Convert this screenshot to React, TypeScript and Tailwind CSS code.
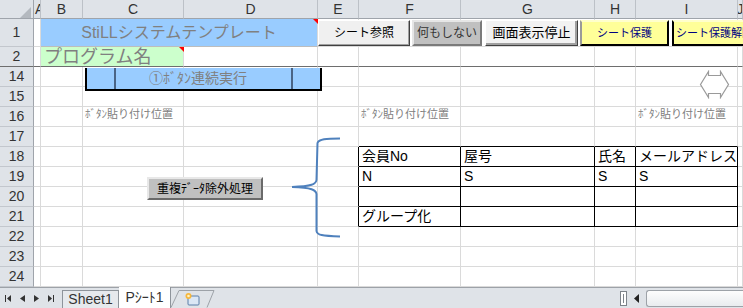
import React from 'react';

const COLS = ['A', 'B', 'C', 'D', 'E', 'F', 'G', 'H', 'I', 'J'];
const ROWS = ['1', '2', '14', '15', '16', '17', '18', '19', '20', '21', '22', '23', '24'];
const TABLE_COLS = ['F', 'G', 'H', 'I'];
const TABLE_ROWS = ['18', '19', '20', '21'];

// table + note text, keyed by cell address
const CELL_TEXT: Record<string, string> = {
  F18: '会員No',
  G18: '屋号',
  H18: '氏名',
  I18: 'メールアドレス',
  F19: 'N',
  G19: 'S',
  H19: 'S',
  I19: 'S',
  F21: 'グループ化',
};

const NOTE_CELLS = ['C16', 'F16', 'I16'];

function Sheet() {
  const cells: React.ReactNode[] = [];

  cells.push(
    <div key="corner" className="relative border-r border-b border-r-[#9fa4ab] border-b-[#9fa4ab] bg-[#dfe3e8]">
      <svg className="absolute left-[20px] top-[7px]" width="11" height="11" viewBox="0 0 11 11">
        <polygon points="11,0 11,11 0,11" fill="#b4b9bf" />
      </svg>
    </div>
  );
  COLS.forEach((c) =>
    cells.push(
      <div
        key={'h' + c}
        className={`flex items-center overflow-hidden whitespace-nowrap border-r border-b border-r-[#bcc1c7] border-b-[#9fa4ab] bg-[#dfe3e8] text-[14px] text-[#333] ${c === 'A' ? 'justify-start pl-[1px]' : 'justify-center'}`}
      >
        {c}
      </div>
    )
  );

  ROWS.forEach((r) => {
    const frozen = r === '2';
    cells.push(
      <div
        key={'r' + r}
        className={`flex items-center justify-center border-r border-b border-r-[#9fa4ab] bg-[#dfe3e8] text-[14px] text-[#333] ${frozen ? 'border-b-[#6e6e6e]' : 'border-b-[#c3c7cd]'}`}
      >
        {r}
      </div>
    );

    COLS.forEach((c) => {
      if (r === '1' && (c === 'C' || c === 'D')) return;
      if (r === '2' && c === 'C') return;
      const addr = c + r;

      if (r === '1' && c === 'B') {
        cells.push(
          <div
            key={addr}
            className="col-span-3 flex items-center justify-center border-r border-b border-r-[#dadada] border-b-[#bdbdbd] bg-[#99ccff] text-[16px] text-[#808080]"
          >
            StiLLシステムテンプレート
          </div>
        );
        return;
      }
      if (r === '2' && c === 'B') {
        cells.push(
          <div
            key={addr}
            className="col-span-2 flex items-center whitespace-nowrap border-r border-b border-r-[#dadada] border-b-[#6e6e6e] bg-[#ccffcc] pl-[3px] text-[18px] leading-none text-[#808080]"
          >
            プログラム名
          </div>
        );
        return;
      }

      const inTable = TABLE_ROWS.includes(r);
      const rightBlack = inTable && (c === 'E' || TABLE_COLS.includes(c));
      const bottomBlack = (r === '17' || inTable) && TABLE_COLS.includes(c);
      const note = NOTE_CELLS.includes(addr);

      cells.push(
        <div
          key={addr}
          className={`flex whitespace-nowrap border-r border-b ${rightBlack ? 'border-r-black' : 'border-r-[#dadada]'} ${frozen ? 'border-b-[#6e6e6e]' : bottomBlack ? 'border-b-black' : 'border-b-[#dadada]'} ${note ? 'items-start pl-[2px] pt-[2px] text-[11px] leading-none text-[#808080]' : 'items-center pl-[3px] text-[14px] text-black'}`}
        >
          {note ? 'ﾎﾞﾀﾝ貼り付け位置' : CELL_TEXT[addr]}
        </div>
      );
    });
  });

  return (
    <div className="grid grid-cols-[34px_7px_42px_101px_134px_41px_102px_134px_41px_102px_1fr] grid-rows-[19px_28px_20px_repeat(11,20px)]">
      {cells}
    </div>
  );
}

function Overlays() {
  return (
    <>
      {/* comment markers */}
      <svg className="absolute left-[313px] top-[19px]" width="5" height="5" viewBox="0 0 5 5">
        <polygon points="0,0 5,0 5,5" fill="#ff0000" />
      </svg>
      <svg className="absolute left-[179px] top-[47px]" width="5" height="5" viewBox="0 0 5 5">
        <polygon points="0,0 5,0 5,5" fill="#ff0000" />
      </svg>

      {/* macro buttons on row 1 */}
      <div className="absolute left-[318px] top-[20px] flex h-[26px] w-[92px] items-center justify-center border border-t-white border-l-white border-r-[#404040] border-b-[#404040] bg-[#f0f0f0] text-[12px] text-black shadow-[inset_-1px_-1px_0_#a0a0a0]">
        シート参照
      </div>
      <div className="absolute left-[412px] top-[20px] flex h-[26px] w-[70px] items-center justify-center border-2 border-t-[#e6e6e6] border-l-[#e6e6e6] border-r-[#7a7a7a] border-b-[#7a7a7a] bg-[#c0c0c0] text-[12px] text-[#333]">
        何もしない
      </div>
      <div className="absolute left-[485px] top-[20px] flex h-[26px] w-[93px] items-center justify-center border border-t-white border-l-white border-r-[#404040] border-b-[#404040] bg-[#f2f2f2] text-[13px] text-black shadow-[inset_-2px_-2px_0_#a0a0a0]">
        画面表示停止
      </div>
      <div className="absolute left-[580px] top-[20px] flex h-[26px] w-[89px] items-center justify-center border-2 border-t-[#ffffcc] border-l-[#9a9a9a] border-r-black border-b-black bg-[#ffff99] text-[11px] text-[#000080]">
        シート保護
      </div>
      <div className="absolute left-[672px] top-[20px] flex h-[26px] w-[80px] items-center justify-start overflow-hidden whitespace-nowrap border-2 border-t-[#ffffcc] border-l-black border-r-black border-b-black bg-[#ffff99] pl-[2px] text-[11px] text-[#000080]">
        シート保護解除
      </div>

      {/* blue run-all bar on row 14 */}
      <div className="absolute left-[85px] top-[68px] flex h-[23px] w-[237px] border-2 border-t-0 border-black bg-[#99ccff]">
        <div className="w-[29px] shrink-0 border-r-2 border-[#4a6485]" />
        <div className="flex min-w-0 flex-1 items-center justify-start whitespace-nowrap border-r-2 border-[#4a6485] pl-[33px] text-[14px] text-[#808080]">
          ①ﾎﾞﾀﾝ連続実行
        </div>
        <div className="w-[27px] shrink-0" />
      </div>

      {/* left-right arrow shape */}
      <svg className="absolute left-[699px] top-[70px]" width="31" height="29" viewBox="0 0 31 29">
        <polygon
          points="1.5,14.5 9.5,1.5 9.5,5.5 21.5,5.5 21.5,1.5 29.5,14.5 21.5,27.5 21.5,23.5 9.5,23.5 9.5,27.5"
          fill="white"
          stroke="#9a9a9a"
          strokeWidth="1.2"
        />
      </svg>

      {/* dedupe button */}
      <div className="absolute left-[147px] top-[177px] flex h-[23px] w-[116px] items-center justify-center border-2 border-t-[#e8e8e8] border-l-[#e8e8e8] border-r-[#6a6a6a] border-b-[#6a6a6a] bg-[#c0c0c0] text-[12px] text-black">
        重複ﾃﾞｰﾀ除外処理
      </div>

      {/* curly brace */}
      <svg className="absolute left-[286px] top-[134px]" width="58" height="108" viewBox="286 134 58 108">
        <path
          d="M340,138.5 C326,138.5 319,139 317.5,143 L316.5,180 C316,184 312,186.5 292,187 C312,187.5 316,190 316.5,194 L316.5,231 C317,235 322,236 340,236.5"
          fill="none"
          stroke="#4f81bd"
          strokeWidth="2"
        />
      </svg>
    </>
  );
}

function TabBar() {
  return (
    <div className="flex h-[21px] items-stretch border-t border-[#9da2a8] bg-[#dfe3e8] text-[14px] text-[#333]">
      <div className="flex w-[62px] shrink-0 items-center gap-[9px] pl-[5px]">
        <svg width="6" height="7" viewBox="0 0 6 7">
          <rect x="0" y="0" width="1" height="7" fill="#333" />
          <polygon points="6,0 6,7 2,3.5" fill="#333" />
        </svg>
        <svg width="5" height="7" viewBox="0 0 5 7">
          <polygon points="5,0 5,7 0,3.5" fill="#333" />
        </svg>
        <svg width="5" height="7" viewBox="0 0 5 7">
          <polygon points="0,0 0,7 5,3.5" fill="#333" />
        </svg>
        <svg width="6" height="7" viewBox="0 0 6 7">
          <polygon points="0,0 0,7 4,3.5" fill="#333" />
          <rect x="5" y="0" width="1" height="7" fill="#333" />
        </svg>
      </div>
      <div className="mt-[2px] flex w-[57px] shrink-0 items-center justify-center border border-b-0 border-[#8e949b] bg-[#e6e9ed]">
        Sheet1
      </div>
      <div className="-mt-px flex w-[52px] shrink-0 items-center justify-center border-r border-[#8e949b] bg-white">
        Pｼｰﾄ1
      </div>
      <div className="relative mt-[2px] flex w-[44px] shrink-0 items-center justify-center">
        <svg className="absolute left-0 top-0" width="44" height="18" viewBox="0 0 44 18">
          <polyline points="0,17.5 8,0.5 43,0.5 36,17.5" fill="none" stroke="#9da2a8" />
        </svg>
        <svg className="relative" width="18" height="15" viewBox="0 0 18 15">
          <rect x="4" y="4" width="11" height="9" rx="1" fill="#dbe7f5" stroke="#5b7fa8" />
          <circle cx="4.5" cy="4" r="3" fill="#f6b73c" />
          <circle cx="4.5" cy="4" r="1.3" fill="#fff3c4" />
        </svg>
      </div>
      <div className="flex-1" />
      <div className="flex items-center gap-[7px]">
        <div className="flex h-[15px] w-[7px] items-center justify-center border border-[#7d838a] bg-white">
          <div className="h-[9px] w-px bg-[#7d838a]" />
        </div>
        <svg width="5" height="9" viewBox="0 0 5 9">
          <polygon points="5,0 5,9 0,4.5" fill="#222" />
        </svg>
        <div className="h-[17px] w-[97px] rounded-l-[3px] border border-r-0 border-[#9da2a8] bg-gradient-to-b from-[#fdfdfd] to-[#e9ecef]" />
      </div>
    </div>
  );
}

export default function App() {
  return (
    <div className="relative h-[308px] w-[743px] overflow-hidden bg-white font-['Liberation_Sans','Noto_Sans_CJK_JP',sans-serif]">
      <Sheet />
      <TabBar />
      <Overlays />
    </div>
  );
}
